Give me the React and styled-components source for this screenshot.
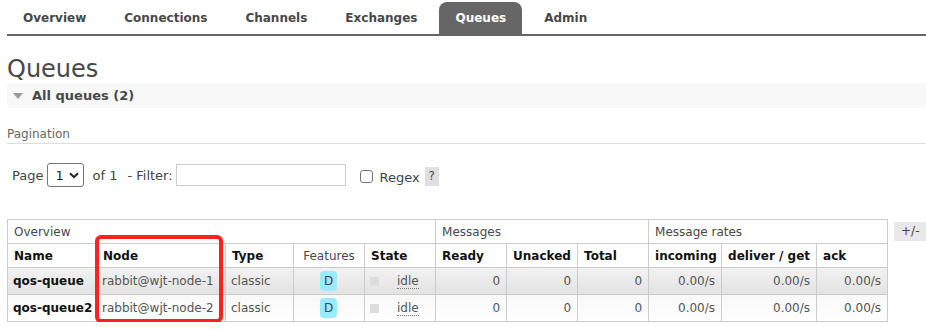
import React from "react";
import styled, { createGlobalStyle } from "styled-components";

const GlobalStyle = createGlobalStyle`
  body {
    margin: 0;
    background: #fff;
    font-family: "DejaVu Sans", Verdana, sans-serif;
    font-size: 12px;
    color: #484848;
  }
`;

const tabs = ["Overview", "Connections", "Channels", "Exchanges", "Queues", "Admin"];

const queues = [
  { name: "qos-queue", node: "rabbit@wjt-node-1" },
  { name: "qos-queue2", node: "rabbit@wjt-node-2" },
];

const cols = [89, 129, 68, 71, 71, 71, 71, 71, 73, 95, 71];

const App = () => {
  return (
    <Page>
      <GlobalStyle />
      <Nav>
        {tabs.map((t) => (
          <Tab key={t} active={t === "Queues"}>{t}</Tab>
        ))}
      </Nav>
      <Title>Queues</Title>
      <SectionBar>
        <Arrow />
        All queues (2)
      </SectionBar>
      <Legend>Pagination</Legend>
      <Controls>
        <Label>Page</Label>
        <Select>
          1
          <svg width="10" height="7" viewBox="0 0 10 7">
            <path d="M1 1.2 L5 5.2 L9 1.2" fill="none" stroke="#222" strokeWidth="2" />
          </svg>
        </Select>
        <Label gap={8}>of 1</Label>
        <Label gap={7}>- Filter:</Label>
        <FilterInput />
        <Check />
        <Label low>Regex</Label>
        <Help>?</Help>
      </Controls>
      <TableRow>
        <TableWrap>
          <List>
            <colgroup>
              {cols.map((w, i) => (
                <col key={i} style={{ width: w }} />
              ))}
            </colgroup>
            <thead>
              <tr>
                <GroupTh colSpan={5}>Overview</GroupTh>
                <GroupTh colSpan={3}>Messages</GroupTh>
                <GroupTh colSpan={3}>Message rates</GroupTh>
              </tr>
              <tr>
                <Th>Name</Th>
                <Th>Node</Th>
                <Th>Type</Th>
                <Th light center>Features</Th>
                <Th>State</Th>
                <Th>Ready</Th>
                <Th>Unacked</Th>
                <Th>Total</Th>
                <Th>incoming</Th>
                <Th>deliver / get</Th>
                <Th>ack</Th>
              </tr>
            </thead>
            <tbody>
              {queues.map((q, i) => (
                <Tr key={q.name} alt={i % 2 === 0}>
                  <Td bold>{q.name}</Td>
                  <Td>{q.node}</Td>
                  <Td>classic</Td>
                  <Td center>
                    <Badge>D</Badge>
                  </Td>
                  <Td>
                    <StateBox />
                    <Idle>idle</Idle>
                  </Td>
                  <Td right>0</Td>
                  <Td right>0</Td>
                  <Td right>0</Td>
                  <Td right>0.00/s</Td>
                  <Td right>0.00/s</Td>
                  <Td right>0.00/s</Td>
                </Tr>
              ))}
            </tbody>
          </List>
          <Highlight />
        </TableWrap>
        <Toggle>+/-</Toggle>
      </TableRow>
    </Page>
  );
};
export default App;

const Page = styled.div`
  padding-left: 7px;
`;

const Nav = styled.div`
  display: flex;
  gap: 6px;
  height: 32px;
  margin-top: 2px;
  border-bottom: 2px solid #666;
`;

const Tab = styled.div`
  padding: 0 16px;
  height: 32px;
  line-height: 32px;
  font-weight: bold;
  font-size: 12px;
  border-radius: 8px 8px 0 0;
  color: ${(p) => (p.active ? "#fff" : "#484848")};
  background: ${(p) => (p.active ? "#666" : "transparent")};
`;

const Title = styled.h1`
  margin: 19px 0 0;
  font-size: 24px;
  font-weight: normal;
  line-height: 28px;
  color: #484848;
`;

const SectionBar = styled.div`
  display: flex;
  align-items: center;
  height: 25px;
  background: #f8f8f8;
  font-weight: bold;
  font-size: 13px;
  color: #484848;
  padding-left: 6px;
`;

const Arrow = styled.span`
  width: 0;
  height: 0;
  border-left: 5px solid transparent;
  border-right: 5px solid transparent;
  border-top: 6px solid #999;
  margin-right: 9px;
`;

const Legend = styled.div`
  margin-top: 19px;
  padding-bottom: 2px;
  border-bottom: 1px solid #ddd;
  color: #666;
  font-size: 12px;
  line-height: 14px;
`;

const Controls = styled.div`
  display: flex;
  align-items: center;
  margin-top: 19px;
  padding-left: 5px;
  height: 24px;
  font-size: 13px;
  color: #444;
`;

const Label = styled.span`
  margin-right: 3px;
  margin-left: ${(p) => p.gap || 0}px;
  position: relative;
  top: ${(p) => (p.low ? 2 : 0)}px;
`;

const Select = styled.div`
  display: flex;
  align-items: center;
  justify-content: space-between;
  box-sizing: border-box;
  width: 37px;
  height: 24px;
  margin-left: 1px;
  padding: 0 4px 0 7px;
  border: 1px solid #767676;
  border-radius: 3px;
  font-size: 13px;
  color: #222;
`;

const FilterInput = styled.input`
  box-sizing: border-box;
  width: 170px;
  height: 22px;
  border: 1px solid #ccc;
  margin-left: 0;
`;

const Check = styled.span`
  box-sizing: border-box;
  width: 13px;
  height: 13px;
  border: 1px solid #767676;
  border-radius: 3px;
  margin: 2px 7px 0 14px;
`;

const Help = styled.span`
  display: inline-flex;
  align-items: center;
  justify-content: center;
  width: 14px;
  height: 19px;
  background: #e0e0e0;
  margin: 2px 0 0 2px;
  font-size: 12px;
`;

const TableRow = styled.div`
  display: flex;
  align-items: flex-start;
  margin-top: 32px;
`;

const TableWrap = styled.div`
  position: relative;
`;

const List = styled.table`
  border-collapse: collapse;
  table-layout: fixed;
  width: 880px;
  color: #484848;
`;

const GroupTh = styled.th`
  height: 23px;
  padding: 0 6px;
  border: 1px solid #ccc;
  text-align: left;
  font-weight: normal;
  font-size: 12px;
`;

const Th = styled.th`
  height: 23px;
  padding: 0 6px;
  border: 1px solid #ccc;
  text-align: ${(p) => (p.center ? "center" : "left")};
  font-weight: ${(p) => (p.light ? "normal" : "bold")};
  font-size: 12px;
  color: ${(p) => (p.light ? "#484848" : "#111")};
  white-space: nowrap;
`;

const Tr = styled.tr`
  background: ${(p) =>
    p.alt
      ? "linear-gradient(to bottom, #f2f2f2, #e2e2e2)"
      : "linear-gradient(to bottom, #f8f8f8, #ffffff)"};
`;

const Td = styled.td`
  height: 26px;
  padding: 0 6px 0 5px;
  border: 1px solid #ccc;
  text-align: ${(p) => (p.right ? "right" : p.center ? "center" : "left")};
  font-weight: ${(p) => (p.bold ? "bold" : "normal")};
  color: ${(p) => (p.bold ? "#111" : "#555")};
  font-size: 12px;
  white-space: nowrap;
  overflow: hidden;
`;

const Badge = styled.span`
  display: inline-block;
  width: 17px;
  height: 20px;
  line-height: 20px;
  border-radius: 4px;
  background: #99ebff;
  color: #444;
  text-align: center;
  vertical-align: middle;
`;

const StateBox = styled.span`
  display: inline-block;
  width: 9px;
  height: 9px;
  background: #ddd;
  margin-right: 18px;
  vertical-align: -1px;
`;

const Idle = styled.abbr`
  text-decoration: none;
  border-bottom: 1px dotted #777;
`;

const Highlight = styled.div`
  position: absolute;
  left: 88px;
  top: 16px;
  width: 128px;
  height: 88px;
  box-sizing: border-box;
  border: 4px solid #ff2020;
  border-radius: 6px;
  pointer-events: none;
`;

const Toggle = styled.div`
  margin: 3px 0 0 6px;
  padding: 0 7px;
  height: 19px;
  line-height: 19px;
  background: #e8e8e8;
  color: #444;
  font-size: 12px;
`;
